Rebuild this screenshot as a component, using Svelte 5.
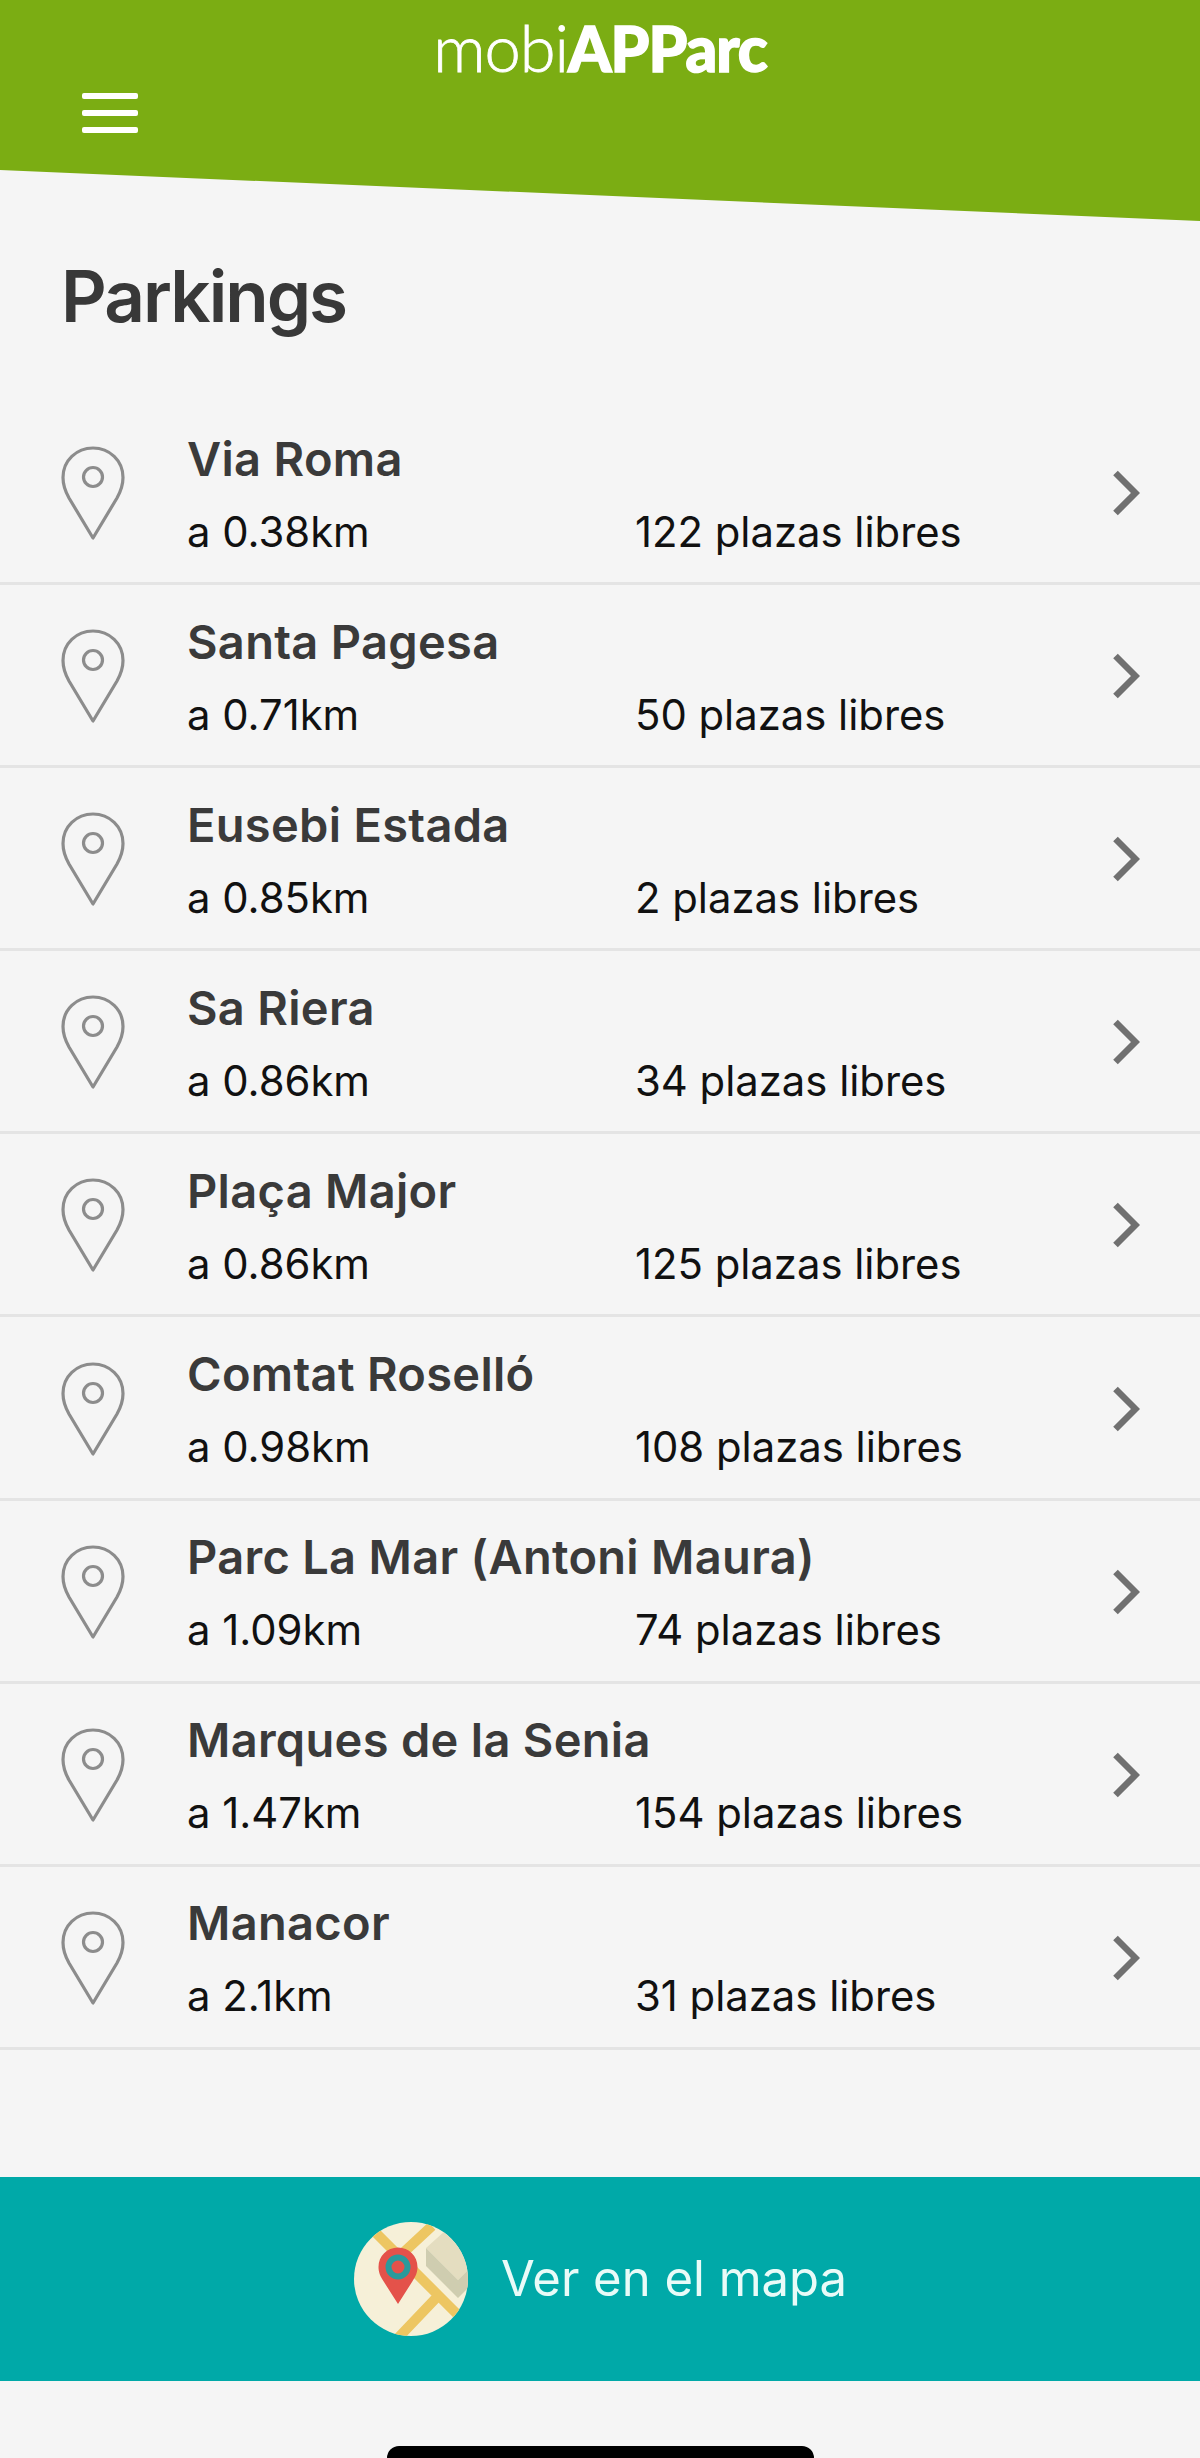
<script>
  const parkings = [
    { name: 'Via Roma', dist: 'a 0.38km', free: '122 plazas libres' },
    { name: 'Santa Pagesa', dist: 'a 0.71km', free: '50 plazas libres' },
    { name: 'Eusebi Estada', dist: 'a 0.85km', free: '2 plazas libres' },
    { name: 'Sa Riera', dist: 'a 0.86km', free: '34 plazas libres' },
    { name: 'Plaça Major', dist: 'a 0.86km', free: '125 plazas libres' },
    { name: 'Comtat Roselló', dist: 'a 0.98km', free: '108 plazas libres' },
    { name: 'Parc La Mar (Antoni Maura)', dist: 'a 1.09km', free: '74 plazas libres' },
    { name: 'Marques de la Senia', dist: 'a 1.47km', free: '154 plazas libres' },
    { name: 'Manacor', dist: 'a 2.1km', free: '31 plazas libres' }
  ];
</script>

<div class="page">
  <header class="top">
    <div class="logo"><span class="thin">mobi</span><span class="bold">APParc</span></div>
    <button class="burger" aria-label="Menú"><i></i><i></i><i></i></button>
  </header>

  <h1>Parkings</h1>

  <ul class="list">
    {#each parkings as p}
      <li class="row">
        <svg class="pin" viewBox="0 0 64 96" width="64" height="96" aria-hidden="true">
          <path d="M32 92 L8 52 C3.500 44 2 38 2 31.500 C2 14.500 15.500 2 32 2 C48.500 2 62 14.500 62 31.500 C62 38 60.500 44 56 52 Z" fill="none" stroke="#8c8c8c" stroke-width="3.200" stroke-linejoin="round"/>
          <circle cx="32" cy="31" r="9.500" fill="none" stroke="#8c8c8c" stroke-width="3.200"/>
        </svg>
        <div class="info">
          <div class="name">{p.name}</div>
          <div class="meta">
            <span>{p.dist}</span>
            <span>{p.free}</span>
          </div>
        </div>
        <svg class="chev" viewBox="0 0 28 46" width="28" height="46" aria-hidden="true">
          <path d="M3.500 3 L23.500 23 L3.500 43" fill="none" stroke="#707070" stroke-width="6.500"/>
        </svg>
      </li>
    {/each}
  </ul>

  <button class="mapbtn">
    <svg class="mapicon" viewBox="0 0 114 114" width="114" height="114" aria-hidden="true">
      <defs><clipPath id="disc"><circle cx="57" cy="57" r="57"/></clipPath></defs>
      <circle cx="57" cy="57" r="57" fill="#f6f0d8"/>
      <g clip-path="url(#disc)">
        <path d="M22 11 L108 97 M78 4 L50 30 M84 74 L44 116" fill="none" stroke="#edc662" stroke-width="10"/>
        <path d="M72 26 L92 8 L116 36 L116 46 L104 58 Z" fill="#e4ddc0"/>
        <path d="M72 26 L72 44 L104 76 L116 64 L116 46 L104 58 Z" fill="#cfcdb0"/>
        <path d="M44 82 L30 60 C26 54 24.500 50 24.500 45 C24.500 34 33 25.500 44 25.500 C55 25.500 63.500 34 63.500 45 C63.500 50 62 54 58 60 Z" fill="#e4524a"/>
        <circle cx="44" cy="45" r="9.500" fill="#e4524a" stroke="#2a9a9c" stroke-width="6"/>
      </g>
    </svg>
    <span>Ver en el mapa</span>
  </button>

  <div class="home"></div>
</div>

<style>
  :global(body) { margin: 0; background: #f5f5f5; }
  .page {
    width: 1200px;
    height: 2458px;
    overflow: hidden;
    background: #f5f5f5;
    font-family: Inter, "Liberation Sans", sans-serif;
    display: flex;
    flex-direction: column;
  }
  .top {
    height: 221px;
    flex: none;
    box-sizing: border-box;
    background: #7bad13;
    clip-path: polygon(0 0, 100% 0, 100% 100%, 0 170px);
    padding-top: 14px;
  }
  .logo {
    height: 66px;
    line-height: 66px;
    text-align: center;
    color: #fff;
    font-family: Lato, sans-serif;
    letter-spacing: -1px;
    white-space: nowrap;
    stroke-linejoin: round;
  }
  .thin { font-size: 65px; font-weight: 300; -webkit-text-stroke: 0.8px #fff; }
  .bold { font-size: 62px; font-weight: 900; -webkit-text-stroke: 1.5px #fff; }
  .burger {
    display: flex;
    flex-direction: column;
    gap: 11px;
    width: 56px;
    margin: 13px 0 0 82px;
    padding: 0;
    border: 0;
    background: none;
  }
  .burger i {
    display: block;
    height: 6px;
    border-radius: 2px;
    background: #fff;
  }
  h1 {
    flex: none;
    margin: 30px 0 0 61px;
    height: 151px;
    font-size: 71px;
    line-height: 90px;
    font-weight: 600;
    letter-spacing: -2px;
    color: #383838;
  }
  .list { flex: none; list-style: none; margin: 0; padding: 0; }
  .row {
    box-sizing: border-box;
    height: 183.100px;
    border-bottom: 3px solid #e4e4e4;
    display: flex;
    align-items: center;
    padding: 0 60px 0 61px;
  }
  .pin { flex: none; margin-top: 4px; }
  .info { flex: 1; margin-left: 62px; padding-top: 6px; }
  .name {
    font-size: 47px;
    line-height: 60px;
    font-weight: 600;
    letter-spacing: 0.300px;
    color: #3a3a3a;
    white-space: nowrap;
  }
  .meta {
    display: grid;
    grid-template-columns: 448px 1fr;
    margin-top: 13px;
    font-size: 41.800px;
    line-height: 60px;
    color: #111;
  }
  .chev { flex: none; margin-top: 2px; }
  .mapbtn {
    margin-top: 127px;
    height: 204px;
    flex: none;
    border: 0;
    padding: 0 0 0 354px;
    background: #00a9a8;
    display: flex;
    align-items: center;
    gap: 33px;
    color: #e9fbf8;
    font-family: inherit;
    font-size: 49px;
    font-weight: 400;
    text-align: left;
  }
  .home {
    width: 427px;
    height: 30px;
    margin: 65px auto 0;
    border-radius: 12px;
    background: #000;
    flex: none;
  }
</style>
